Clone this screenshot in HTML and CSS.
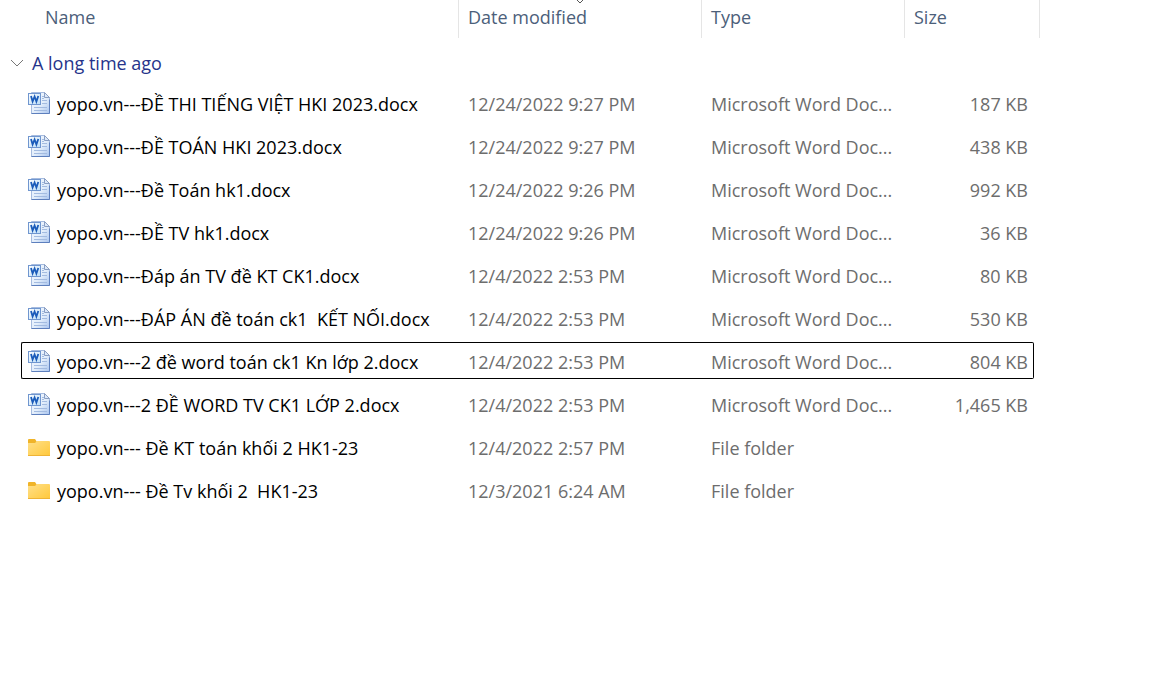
FILE: index.html
```html
<!DOCTYPE html>
<html lang="en">
<head>
<meta charset="utf-8">
<title>Files</title>
<link rel="stylesheet" href="styles.css">
</head>
<body>
<svg class="defs" aria-hidden="true">
  <defs>
    <linearGradient id="page" x1="0" y1="0" x2="1" y2="1"><stop offset="0" stop-color="#f4f9ff"/><stop offset=".55" stop-color="#e3eefb"/><stop offset="1" stop-color="#a9c4ee"/></linearGradient>
    <linearGradient id="badge" x1="0" y1="0" x2="1" y2="1"><stop offset="0" stop-color="#ffffff"/><stop offset="1" stop-color="#b9dcf7"/></linearGradient>
    <linearGradient id="folder" x1="0" y1="0" x2="1" y2="1"><stop offset="0" stop-color="#ffe08a"/><stop offset="1" stop-color="#ffc83a"/></linearGradient>
    <symbol id="word" viewBox="0 0 24 24">
      <path d="M4.5 1.5h13l5 5v16h-18z" fill="url(#page)" stroke="#a5bbdf"/>
      <path d="M4.5 22.5h18v-14" fill="none" stroke="#5d7fbd"/>
      <path d="M17.5 1.5v5h5z" fill="#dce8f8" stroke="#8a9fc4"/>
      <path d="M15 5.500h2M15 7.500h2M15 9.500h5M15 12.500h5M7 16.500h13M7 19.500h13" stroke="#a3bbe0"/>
      <rect x="1.500" y="2.500" width="12" height="11" fill="url(#badge)" stroke="#7096cf"/>
      <path d="M4 5l1.600 5.500L7.600 5.500l1.800 5L11.300 5" fill="none" stroke="#1b5cba" stroke-width="1.800"/>
    </symbol>
    <symbol id="dir" viewBox="0 0 24 24">
      <path d="M1 5q0-1 1-1h6l2 3v4H1z" fill="#f0b429"/>
      <path d="M1 8h7l2-2h12q1 0 1 1v13q0 1-1 1H2q-1 0-1-1z" fill="url(#folder)"/>
      <path d="M1 20.500h22" stroke="#eeb336"/>
    </symbol>
  </defs>
</svg>
<table class="files">
  <colgroup><col class="c-gutter"><col><col class="c-date"><col class="c-type"><col class="c-size"><col class="c-tail"></colgroup>
  <thead>
    <tr>
      <th></th>
      <th class="name-head" scope="col">Name</th>
      <th class="sorted" scope="col" aria-sort="descending">Date modified<svg class="sort" viewBox="0 0 8 4" aria-hidden="true"><path d="M1 0l3 3 3-3"/></svg></th>
      <th scope="col">Type</th>
      <th class="last" scope="col" colspan="2">Size</th>
    </tr>
  </thead>
  <tbody>
    <tr class="group"><th colspan="6" scope="rowgroup"><button type="button" class="toggle" aria-expanded="true"><svg class="chevron" viewBox="0 0 14 8" aria-hidden="true"><path d="M1 1l6 6 6-6"/></svg>A long time ago</button></th></tr>
    <tr><td></td><td class="name"><svg class="icon" aria-hidden="true"><use href="#word"/></svg>yopo.vn---ĐỀ THI TIẾNG VIỆT HKI 2023.docx</td><td>12/24/2022 9:27 PM</td><td>Microsoft Word Doc...</td><td class="size">187 KB</td></tr>
    <tr><td></td><td class="name"><svg class="icon" aria-hidden="true"><use href="#word"/></svg>yopo.vn---ĐỀ TOÁN HKI 2023.docx</td><td>12/24/2022 9:27 PM</td><td>Microsoft Word Doc...</td><td class="size">438 KB</td></tr>
    <tr><td></td><td class="name"><svg class="icon" aria-hidden="true"><use href="#word"/></svg>yopo.vn---Đề Toán hk1.docx</td><td>12/24/2022 9:26 PM</td><td>Microsoft Word Doc...</td><td class="size">992 KB</td></tr>
    <tr><td></td><td class="name"><svg class="icon" aria-hidden="true"><use href="#word"/></svg>yopo.vn---ĐỀ TV hk1.docx</td><td>12/24/2022 9:26 PM</td><td>Microsoft Word Doc...</td><td class="size">36 KB</td></tr>
    <tr><td></td><td class="name"><svg class="icon" aria-hidden="true"><use href="#word"/></svg>yopo.vn---Đáp án TV đề KT CK1.docx</td><td>12/4/2022 2:53 PM</td><td>Microsoft Word Doc...</td><td class="size">80 KB</td></tr>
    <tr><td></td><td class="name"><svg class="icon" aria-hidden="true"><use href="#word"/></svg>yopo.vn---ĐÁP ÁN đề toán ck1  KẾT NỐI.docx</td><td>12/4/2022 2:53 PM</td><td>Microsoft Word Doc...</td><td class="size">530 KB</td></tr>
    <tr class="focused"><td></td><td class="name"><svg class="icon" aria-hidden="true"><use href="#word"/></svg>yopo.vn---2 đề word toán ck1 Kn lớp 2.docx</td><td>12/4/2022 2:53 PM</td><td>Microsoft Word Doc...</td><td class="size">804 KB</td></tr>
    <tr><td></td><td class="name"><svg class="icon" aria-hidden="true"><use href="#word"/></svg>yopo.vn---2 ĐỀ WORD TV CK1 LỚP 2.docx</td><td>12/4/2022 2:53 PM</td><td>Microsoft Word Doc...</td><td class="size">1,465 KB</td></tr>
    <tr><td></td><td class="name"><svg class="icon" aria-hidden="true"><use href="#dir"/></svg>yopo.vn--- Đề KT toán khối 2 HK1-23</td><td>12/4/2022 2:57 PM</td><td>File folder</td><td class="size"></td></tr>
    <tr><td></td><td class="name"><svg class="icon" aria-hidden="true"><use href="#dir"/></svg>yopo.vn--- Đề Tv khối 2  HK1-23</td><td>12/3/2021 6:24 AM</td><td>File folder</td><td class="size"></td></tr>
  </tbody>
</table>
</body>
</html>
```
FILE: styles.css
```css
* { box-sizing: border-box; }
body {
  margin: 0;
  background: #fff;
  color: #6d6d6d;
  font: 18px/24px "Segoe UI", "Open Sans", "Noto Sans", sans-serif;
}
.defs { position: absolute; width: 0; height: 0; }
.files {
  width: calc(100% - 109px);
  min-width: 960px;
  margin-top: -6px;
  table-layout: fixed;
  border-collapse: separate;
  border-spacing: 0 6px;
}
.c-gutter { width: 21px; }
.c-date { width: 243px; }
.c-type { width: 203px; }
.c-size { width: 130px; }
.c-tail { width: 6px; }
th { font-weight: 400; text-align: left; }
thead th {
  height: 38px;
  padding: 0 0 4px 9px;
  border-left: 1px solid #e5e5e5;
  color: #4c607a;
}
thead th:first-child, thead .name-head { border-left: 0; }
thead th:first-child { padding: 0; }
thead .name-head { padding-left: 24px; }
thead .last { border-right: 1px solid #e5e5e5; }
.sorted { position: relative; }
.sort { position: absolute; top: 0; left: 50%; width: 8px; height: 4px; margin-left: -4px; }
.sort path { fill: none; stroke: #555; }
.group th { height: 34px; padding: 0 0 0 10px; }
.toggle {
  display: flex;
  align-items: center;
  gap: 8px;
  padding: 4px 0 0;
  border: 0;
  background: none;
  color: #26348b;
  font: inherit;
}
.chevron { width: 14px; height: 8px; }
.chevron path { fill: none; stroke: #777; }
td {
  height: 37px;
  padding: 3px 0 0 10px;
  border: 0 solid transparent;
  border-width: 1px 0;
  white-space: pre;
  vertical-align: middle;
}
td:first-child { padding: 0; border: 0; }
.name { padding: 5px 0 0 5px; border-left-width: 1px; border-radius: 2px 0 0 2px; color: #000; }
.size { padding-right: 5px; border-right-width: 1px; border-radius: 0 2px 2px 0; text-align: right; }
.focused td { border-color: #000; }
.icon { width: 24px; height: 24px; margin: -3px 6px 3px 0; vertical-align: middle; }
```
